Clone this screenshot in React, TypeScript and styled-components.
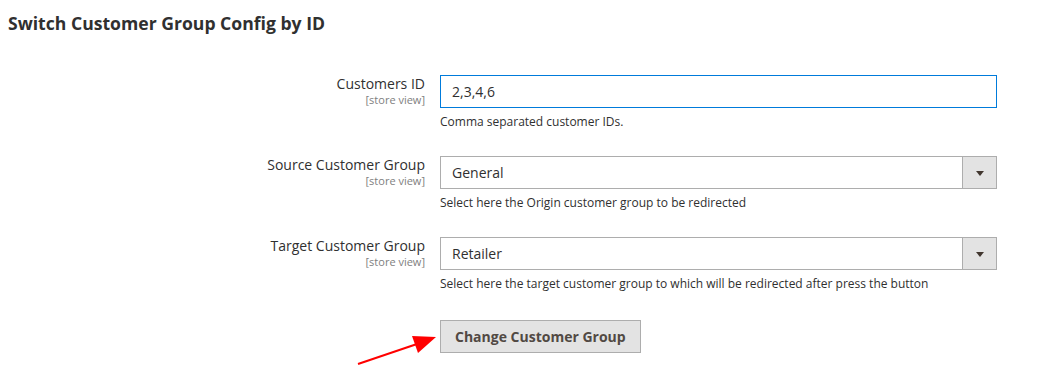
import React from "react";
import styled, { createGlobalStyle } from "styled-components";

const GlobalStyle = createGlobalStyle`
  body {
    margin: 0;
    background: #ffffff;
    font-family: "Open Sans", "Liberation Sans", sans-serif;
    color: #303030;
  }
`;

const Page = styled.div`
  position: relative;
  width: 1041px;
  height: 392px;
  padding: 13px 0 0 8px;
  box-sizing: border-box;
`;

const Title = styled.h2`
  margin: 0;
  font-size: 17.6px;
  line-height: 20px;
  font-weight: 700;
  color: #303030;
`;

const Form = styled.div`
  display: grid;
  grid-template-columns: 417px 557px;
  column-gap: 15px;
  margin-top: 42px;
`;

const LabelCell = styled.div`
  text-align: right;
`;

const Label = styled.div`
  font-size: 14px;
  line-height: 18px;
  color: #303030;
`;

const Scope = styled.div`
  font-size: 11px;
  line-height: 13px;
  color: #808080;
`;

const Control = styled.div<{ $last?: boolean }>`
  margin-bottom: ${(p) => (p.$last ? "28px" : "26px")};
`;

const Input = styled.div<{ $focused?: boolean }>`
  display: flex;
  align-items: center;
  height: 33px;
  box-sizing: border-box;
  border: 1px solid ${(p) => (p.$focused ? "#007bdb" : "#adadad")};
  padding-left: 11px;
  font-size: 14px;
  color: #303030;
  background: #fff;
`;

const Select = styled(Input)`
  padding-left: 0;
  & > span {
    flex: 1;
    padding-left: 11px;
  }
`;

const ArrowBox = styled.div`
  width: 33px;
  height: 31px;
  border-left: 1px solid #adadad;
  background: #e3e3e3;
  display: flex;
  align-items: center;
  justify-content: center;
  &::after {
    content: "";
    border-left: 4px solid transparent;
    border-right: 4px solid transparent;
    border-top: 5px solid #41362f;
    margin-top: 1px;
  }
`;

const Note = styled.div`
  margin-top: 5px;
  font-size: 12px;
  line-height: 17px;
  color: #303030;
`;

const Button = styled.button`
  height: 33px;
  padding: 0 14px 1px;
  border: 1px solid #adadad;
  background: #e3e3e3;
  color: #514943;
  font-family: "Open Sans", "Liberation Sans", sans-serif;
  font-size: 14px;
  font-weight: 700;
  cursor: pointer;
`;

const Arrow = styled.svg`
  position: absolute;
  left: 355px;
  top: 330px;
`;

interface IField {
  label: string;
  value: string;
  note: string;
  select?: boolean;
  focused?: boolean;
}

const fields: IField[] = [
  { label: "Customers ID", value: "2,3,4,6", note: "Comma separated customer IDs.", focused: true },
  {
    label: "Source Customer Group",
    value: "General",
    note: "Select here the Origin customer group to be redirected",
    select: true,
  },
  {
    label: "Target Customer Group",
    value: "Retailer",
    note: "Select here the target customer group to which will be redirected after press the button",
    select: true,
  },
];

export default function App() {
  return (
    <Page>
      <GlobalStyle />
      <Title>Switch Customer Group Config by ID</Title>
      <Form>
        {fields.map((f, i) => (
          <React.Fragment key={f.label}>
            <LabelCell>
              <Label>{f.label}</Label>
              <Scope>[store view]</Scope>
            </LabelCell>
            <Control $last={i === fields.length - 1}>
              {f.select ? (
                <Select>
                  <span>{f.value}</span>
                  <ArrowBox />
                </Select>
              ) : (
                <Input $focused={f.focused}>{f.value}</Input>
              )}
              <Note>{f.note}</Note>
            </Control>
          </React.Fragment>
        ))}
        <div />
        <div>
          <Button>Change Customer Group</Button>
        </div>
      </Form>
      <Arrow width="85" height="40" viewBox="0 0 85 40">
        <line x1="3" y1="34" x2="62" y2="14" stroke="#ff0000" strokeWidth="2" />
        <polygon points="81,7 57,6 63,23" fill="#ff0000" />
      </Arrow>
    </Page>
  );
}
